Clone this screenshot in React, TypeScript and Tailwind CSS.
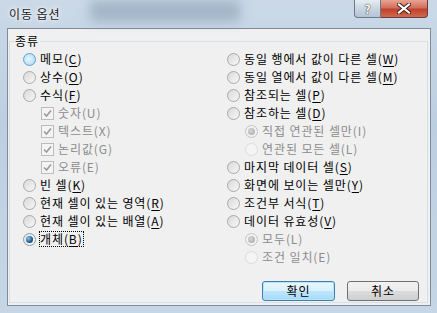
import React from "react";

type RadioState = "off" | "hover" | "on" | "dis-on" | "dis-off";

function Radio({ state }: { state: RadioState }) {
  if (state === "on") {
    return (
      <span className="flex h-[13px] w-[13px] shrink-0 items-center justify-center rounded-full border border-[#8a9aac] bg-[linear-gradient(135deg,#dfe3e8,#fafafa)]">
        <span className="h-[7px] w-[7px] rounded-full bg-[radial-gradient(circle_at_35%_35%,#8fc3ea,#1d5a8c_60%,#0d3a63)]" />
      </span>
    );
  }
  if (state === "hover") {
    return <span className="h-[13px] w-[13px] shrink-0 rounded-full border border-[#5e9fd0] bg-[radial-gradient(circle_at_45%_45%,#e8f6fd,#b9e0f6_70%,#9ccfee)]" />;
  }
  if (state === "dis-on") {
    return (
      <span className="flex h-[13px] w-[13px] shrink-0 items-center justify-center rounded-full border border-[#c4c4c4] bg-[#f2f2f2]">
        <span className="h-[7px] w-[7px] rounded-full bg-[radial-gradient(circle_at_40%_40%,#d6d6d6,#a4a4a4)]" />
      </span>
    );
  }
  if (state === "dis-off") {
    return <span className="h-[13px] w-[13px] shrink-0 rounded-full border border-[#dcdcdc] bg-[#f4f4f4]" />;
  }
  return <span className="h-[13px] w-[13px] shrink-0 rounded-full border border-[#a9a9a9] bg-[linear-gradient(135deg,#d9d9d9,#f7f7f7)]" />;
}

function Check() {
  return (
    <span className="flex h-[13px] w-[13px] shrink-0 items-center justify-center border border-[#bcbcbc] bg-[#f4f4f4]">
      <svg width="9" height="9" viewBox="0 0 9 9">
        <path d="M1 4.5 L3.5 7 L8 1.5" fill="none" stroke="#9a9a9a" strokeWidth="1.6" />
      </svg>
    </span>
  );
}

type Item = {
  label: string;
  key?: string;
  kind: "radio" | "check";
  state?: RadioState;
  sub?: boolean;
  disabled?: boolean;
  focus?: boolean;
};

const left: Item[] = [
  { label: "메모", key: "C", kind: "radio", state: "hover" },
  { label: "상수", key: "O", kind: "radio" },
  { label: "수식", key: "F", kind: "radio" },
  { label: "숫자(U)", kind: "check", sub: true, disabled: true },
  { label: "텍스트(X)", kind: "check", sub: true, disabled: true },
  { label: "논리값(G)", kind: "check", sub: true, disabled: true },
  { label: "오류(E)", kind: "check", sub: true, disabled: true },
  { label: "빈 셀", key: "K", kind: "radio" },
  { label: "현재 셀이 있는 영역", key: "R", kind: "radio" },
  { label: "현재 셀이 있는 배열", key: "A", kind: "radio" },
  { label: "개체", key: "B", kind: "radio", state: "on", focus: true },
];

const right: Item[] = [
  { label: "동일 행에서 값이 다른 셀", key: "W", kind: "radio" },
  { label: "동일 열에서 값이 다른 셀", key: "M", kind: "radio" },
  { label: "참조되는 셀", key: "P", kind: "radio" },
  { label: "참조하는 셀", key: "D", kind: "radio" },
  { label: "직접 연관된 셀만(I)", kind: "radio", state: "dis-on", sub: true, disabled: true },
  { label: "연관된 모든 셀(L)", kind: "radio", state: "dis-off", sub: true, disabled: true },
  { label: "마지막 데이터 셀", key: "S", kind: "radio" },
  { label: "화면에 보이는 셀만", key: "Y", kind: "radio" },
  { label: "조건부 서식", key: "T", kind: "radio" },
  { label: "데이터 유효성", key: "V", kind: "radio" },
  { label: "모두(L)", kind: "radio", state: "dis-on", sub: true, disabled: true },
  { label: "조건 일치(E)", kind: "radio", state: "dis-off", sub: true, disabled: true },
];

function Row({ item }: { item: Item }) {
  const text = (
    <span className={`tracking-[0.9px] ${item.disabled ? "text-[#8c8c8c]" : "text-black"}`}>
      {item.label}
      {item.key && (
        <>
          (<span className="underline underline-offset-2">{item.key}</span>)
        </>
      )}
    </span>
  );
  return (
    <div className={`flex h-[18px] items-center gap-[4px] ${item.sub ? "pl-[18px]" : ""}`}>
      {item.kind === "check" ? <Check /> : <Radio state={item.state ?? "off"} />}
      {item.focus ? <span className="-ml-[1px] border border-dotted border-black leading-[14px]">{text}</span> : text}
    </div>
  );
}

export default function App() {
  return (
    <div className="flex h-[313px] w-[437px] flex-col overflow-hidden bg-[linear-gradient(180deg,#cbd9e7_0%,#bccfe1_40%,#c6d6e6_100%)] font-['Noto_Sans_CJK_KR','Noto_Sans',sans-serif] text-[12px]">
      <div className="relative flex h-[28px] shrink-0 items-start justify-between">
        <div className="absolute left-[90px] top-[0px] h-[22px] w-[150px] bg-[#7d93ab] opacity-50 blur-[6px]" />
        <span className="relative pl-[9px] pt-[6px] leading-[16px] tracking-[0.9px] text-[#1b1b1b] [text-shadow:0_0_6px_#ffffff,0_0_3px_#ffffff]">이동 옵션</span>
        <div className="relative mr-[9px] flex h-[18px]">
          <div className="flex w-[27px] items-center justify-center rounded-bl-[4px] border border-t-0 border-[#6b7b8c] bg-[linear-gradient(180deg,#e6edf4_0%,#c9d5e2_50%,#b4c3d3_100%)] text-[12px] font-bold leading-none text-white [text-shadow:0_0_1px_#333,0_0_1px_#333]">
            ?
          </div>
          <div className="flex w-[47px] items-center justify-center rounded-br-[4px] border border-l-0 border-t-0 border-[#6b3b36] bg-[linear-gradient(180deg,#e8a493_0%,#d46f5c_45%,#c0412c_55%,#cf6a4f_100%)]">
            <svg width="14" height="11" viewBox="0 0 14 11">
              <path d="M2 1.5 L12 9.5 M12 1.5 L2 9.5" stroke="#3a1a15" strokeWidth="4" strokeLinecap="square" />
              <path d="M2 1.5 L12 9.5 M12 1.5 L2 9.5" stroke="#ffffff" strokeWidth="2.2" strokeLinecap="square" />
            </svg>
          </div>
        </div>
      </div>
      <div className="ml-[7px] mr-[6px] flex h-[278px] shrink-0 flex-col border border-[#7d8c9c] bg-[#f0f0f0]">
        <div className="relative mb-[2px] ml-[1px] mr-[2px] mt-[12px] flex flex-1 flex-col border border-[#d5dfe5]">
          <span className="absolute -top-[9px] left-[4px] bg-[#f0f0f0] px-[1px] leading-[16px] tracking-[0.9px] text-black">종류</span>
          <div className="flex pl-[13px] pt-[8px]">
            <div className="flex w-[204px] flex-col">
              {left.map((it) => (
                <Row key={it.label} item={it} />
              ))}
            </div>
            <div className="flex flex-col">
              {right.map((it) => (
                <Row key={it.label} item={it} />
              ))}
            </div>
          </div>
          <div className="mt-auto flex justify-end gap-[12px] pb-[1px] pr-[8px]">
            <button className="flex h-[20px] w-[73px] items-center justify-center rounded-[3px] border border-[#3c7fb1] bg-[linear-gradient(180deg,#eaf6fd_0%,#d9f0fc_50%,#bee6fd_51%,#a7d9f5_100%)] text-[12px] leading-none tracking-[0.9px] text-black shadow-[inset_0_0_0_1px_#b7e4f9]">
              확인
            </button>
            <button className="flex h-[20px] w-[72px] items-center justify-center rounded-[3px] border border-[#707070] bg-[linear-gradient(180deg,#f2f2f2_0%,#ebebeb_50%,#dddddd_51%,#cfcfcf_100%)] text-[12px] leading-none tracking-[0.9px] text-black">
              취소
            </button>
          </div>
        </div>
      </div>
    </div>
  );
}
